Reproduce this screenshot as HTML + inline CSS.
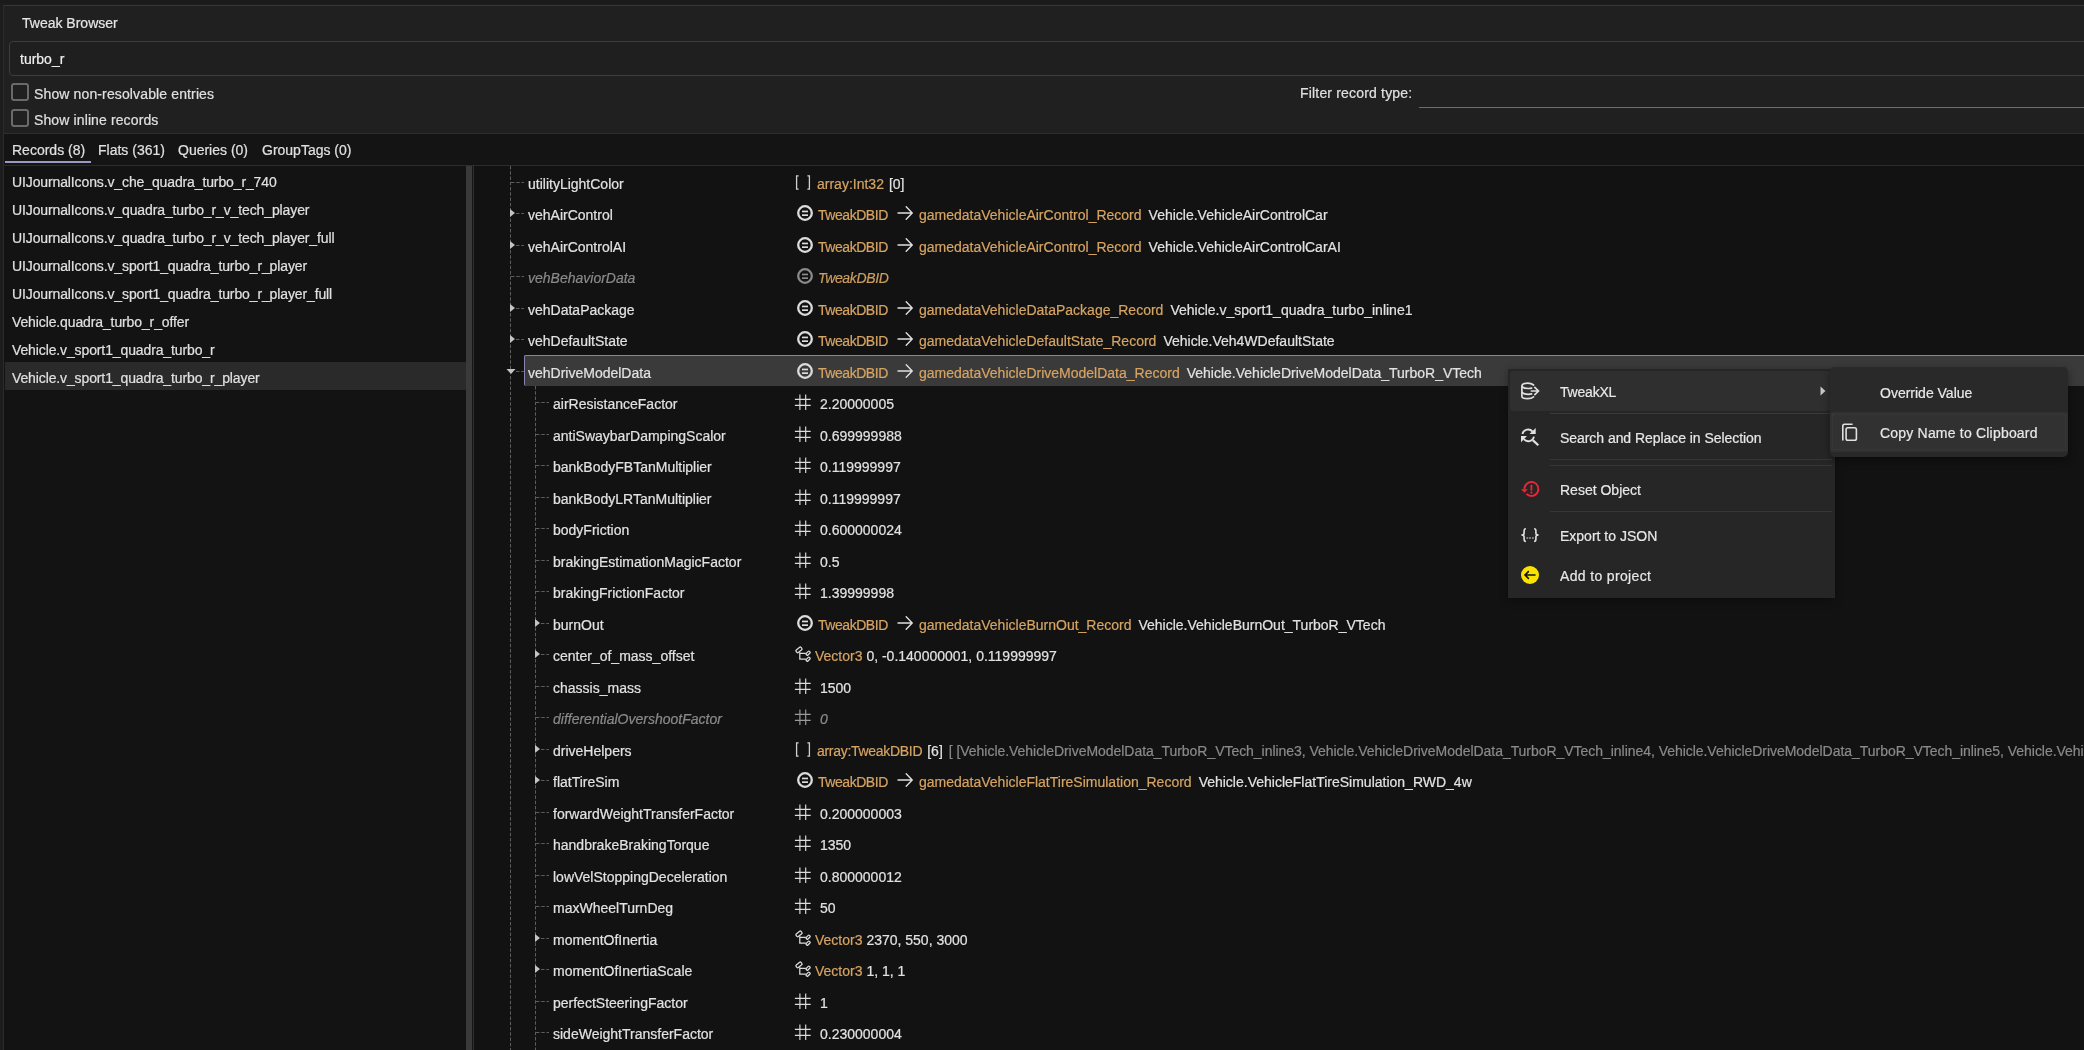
<!DOCTYPE html>
<html><head><meta charset="utf-8"><style>
html,body{margin:0;padding:0;width:2084px;height:1050px;overflow:hidden;background:#1e1e1e}
.t{position:absolute;white-space:nowrap;will-change:transform;-webkit-text-stroke:0.2px currentColor;font-family:"Liberation Sans", sans-serif;font-size:14px;line-height:16px}
svg{overflow:visible}
</style></head><body>
<div style="position:absolute;left:0px;top:0px;width:2084px;height:1050px;background:#1d1d1d;"></div>
<div style="position:absolute;left:0px;top:0px;width:2084px;height:4px;background:#1b1b1b;"></div>
<div style="position:absolute;left:3px;top:5px;width:2081px;height:1045px;background:#202020;border-left:1px solid #2b2b2b;border-top:1px solid #363636;box-sizing:border-box"></div>
<div class="t" style="left:22px;top:15px;color:#e6e6e6;">Tweak Browser</div>
<div style="position:absolute;left:9px;top:41px;width:2200px;height:35px;box-sizing:border-box;border:1px solid #3d3c44;border-radius:4px;background:#1f1f1f"></div>
<div class="t" style="left:20px;top:50.7px;color:#f0f0f0;">turbo_r</div>
<div style="position:absolute;left:11px;top:83px;width:18px;height:18px;box-sizing:border-box;border:2px solid #6a6a6a;border-radius:3px"></div>
<div class="t" style="left:34px;top:86.2px;color:#e0e0e0;letter-spacing:0.13px">Show non-resolvable entries</div>
<div style="position:absolute;left:11px;top:109px;width:18px;height:18px;box-sizing:border-box;border:2px solid #6a6a6a;border-radius:3px"></div>
<div class="t" style="left:34px;top:112.2px;color:#e0e0e0;letter-spacing:0.12px">Show inline records</div>
<div class="t" style="left:1300px;top:85px;color:#e0e0e0;letter-spacing:0.18px">Filter record type:</div>
<div style="position:absolute;left:1419px;top:107px;width:665px;height:1px;background:#6c6c6c;"></div>
<div style="position:absolute;left:4px;top:133px;width:2080px;height:1px;background:#2e2e2e;"></div>
<div style="position:absolute;left:4px;top:134px;width:2080px;height:31px;background:#141414;"></div>
<div class="t" style="left:12px;top:142px;color:#e0e0e0;">Records (8)</div>
<div class="t" style="left:98px;top:142px;color:#e0e0e0;">Flats (361)</div>
<div class="t" style="left:178px;top:142px;color:#e0e0e0;">Queries (0)</div>
<div class="t" style="left:262px;top:142px;color:#e0e0e0;">GroupTags (0)</div>
<div style="position:absolute;left:5px;top:161px;width:86px;height:2px;background:#9f98c4;"></div>
<div style="position:absolute;left:4px;top:165px;width:2080px;height:1px;background:#2c2c2c;"></div>
<div style="position:absolute;left:4px;top:166px;width:462px;height:884px;background:#131313;"></div>
<div style="position:absolute;left:466px;top:166px;width:6px;height:884px;background:#3a3a3a;"></div>
<div style="position:absolute;left:472px;top:166px;width:1px;height:884px;background:#161616;"></div>
<div style="position:absolute;left:473px;top:166px;width:1px;height:884px;background:#303030;"></div>
<div style="position:absolute;left:474px;top:166px;width:1610px;height:884px;background:#121212;"></div>
<div style="position:absolute;left:5px;top:362px;width:461px;height:28px;background:#2a2a2a;"></div>
<div class="t" style="left:12px;top:174.1px;color:#e0e0e0;letter-spacing:-0.12px">UIJournalIcons.v_che_quadra_turbo_r_740</div>
<div class="t" style="left:12px;top:202.1px;color:#e0e0e0;letter-spacing:-0.12px">UIJournalIcons.v_quadra_turbo_r_v_tech_player</div>
<div class="t" style="left:12px;top:230.1px;color:#e0e0e0;letter-spacing:-0.12px">UIJournalIcons.v_quadra_turbo_r_v_tech_player_full</div>
<div class="t" style="left:12px;top:258.1px;color:#e0e0e0;letter-spacing:-0.12px">UIJournalIcons.v_sport1_quadra_turbo_r_player</div>
<div class="t" style="left:12px;top:286.1px;color:#e0e0e0;letter-spacing:-0.12px">UIJournalIcons.v_sport1_quadra_turbo_r_player_full</div>
<div class="t" style="left:12px;top:314.1px;color:#e0e0e0;letter-spacing:-0.12px">Vehicle.quadra_turbo_r_offer</div>
<div class="t" style="left:12px;top:342.1px;color:#e0e0e0;letter-spacing:-0.12px">Vehicle.v_sport1_quadra_turbo_r</div>
<div class="t" style="left:12px;top:370.1px;color:#e0e0e0;letter-spacing:-0.12px">Vehicle.v_sport1_quadra_turbo_r_player</div>
<div style="position:absolute;left:524px;top:355px;width:1560px;height:31px;background:#3a3a3a;border-top:1px solid #8a82b0;border-left:1px solid #8a82b0;box-sizing:border-box;border-radius:2px 0 0 2px"></div>
<svg style="position:absolute;left:0;top:0" width="2084" height="1050" viewBox="0 0 2084 1050"><path d="M510.5 166V1050" stroke="#5c5c5c" stroke-width="1" stroke-dasharray="3.5 1.75"/><path d="M535.5 386V1050" stroke="#5c5c5c" stroke-width="1" stroke-dasharray="3.5 1.75"/><path d="M511 182.5H524" stroke="#5c5c5c" stroke-width="1" stroke-dasharray="3.5 1.75"/><path d="M516 213.5H524" stroke="#5c5c5c" stroke-width="1" stroke-dasharray="3.5 1.75"/><path d="M516 245.5H524" stroke="#5c5c5c" stroke-width="1" stroke-dasharray="3.5 1.75"/><path d="M511 276.5H524" stroke="#5c5c5c" stroke-width="1" stroke-dasharray="3.5 1.75"/><path d="M516 308.5H524" stroke="#5c5c5c" stroke-width="1" stroke-dasharray="3.5 1.75"/><path d="M516 339.5H524" stroke="#5c5c5c" stroke-width="1" stroke-dasharray="3.5 1.75"/><path d="M516 371.5H524" stroke="#5c5c5c" stroke-width="1" stroke-dasharray="3.5 1.75"/><path d="M536 402.5H549" stroke="#5c5c5c" stroke-width="1" stroke-dasharray="3.5 1.75"/><path d="M536 434.5H549" stroke="#5c5c5c" stroke-width="1" stroke-dasharray="3.5 1.75"/><path d="M536 465.5H549" stroke="#5c5c5c" stroke-width="1" stroke-dasharray="3.5 1.75"/><path d="M536 497.5H549" stroke="#5c5c5c" stroke-width="1" stroke-dasharray="3.5 1.75"/><path d="M536 528.5H549" stroke="#5c5c5c" stroke-width="1" stroke-dasharray="3.5 1.75"/><path d="M536 560.5H549" stroke="#5c5c5c" stroke-width="1" stroke-dasharray="3.5 1.75"/><path d="M536 591.5H549" stroke="#5c5c5c" stroke-width="1" stroke-dasharray="3.5 1.75"/><path d="M541 623.5H549" stroke="#5c5c5c" stroke-width="1" stroke-dasharray="3.5 1.75"/><path d="M541 654.5H549" stroke="#5c5c5c" stroke-width="1" stroke-dasharray="3.5 1.75"/><path d="M536 686.5H549" stroke="#5c5c5c" stroke-width="1" stroke-dasharray="3.5 1.75"/><path d="M536 717.5H549" stroke="#5c5c5c" stroke-width="1" stroke-dasharray="3.5 1.75"/><path d="M541 749.5H549" stroke="#5c5c5c" stroke-width="1" stroke-dasharray="3.5 1.75"/><path d="M541 780.5H549" stroke="#5c5c5c" stroke-width="1" stroke-dasharray="3.5 1.75"/><path d="M536 812.5H549" stroke="#5c5c5c" stroke-width="1" stroke-dasharray="3.5 1.75"/><path d="M536 843.5H549" stroke="#5c5c5c" stroke-width="1" stroke-dasharray="3.5 1.75"/><path d="M536 875.5H549" stroke="#5c5c5c" stroke-width="1" stroke-dasharray="3.5 1.75"/><path d="M536 906.5H549" stroke="#5c5c5c" stroke-width="1" stroke-dasharray="3.5 1.75"/><path d="M541 938.5H549" stroke="#5c5c5c" stroke-width="1" stroke-dasharray="3.5 1.75"/><path d="M541 969.5H549" stroke="#5c5c5c" stroke-width="1" stroke-dasharray="3.5 1.75"/><path d="M536 1001.5H549" stroke="#5c5c5c" stroke-width="1" stroke-dasharray="3.5 1.75"/><path d="M536 1032.5H549" stroke="#5c5c5c" stroke-width="1" stroke-dasharray="3.5 1.75"/></svg>
<div class="t" style="left:528px;top:175.8px;color:#e2e2e2;">utilityLightColor</div>
<svg style="position:absolute;left:793.6px;top:173.70000000000002px;" width="18" height="18" viewBox="0 0 18 18"><g stroke="#d0d0d0" stroke-width="1.3" fill="none"><path d="M4.6 1.9H2.6V15.1H4.6M13.4 1.9H15.4V15.1H13.4"/></g></svg>
<div class="t" style="left:817px;top:175.8px;color:#e2e2e2;"><span style="color:#d6a463;">array:Int32</span><span style="color:#e2e2e2;margin-left:5px">[0]</span></div>
<svg style="position:absolute;left:508.5px;top:208.4px;" width="8" height="10" viewBox="0 0 8 10"><path d="M1 1V9L6 5Z" fill="#c4c4c4"/></svg>
<div class="t" style="left:528px;top:207.3px;color:#e2e2e2;">vehAirControl</div>
<svg style="position:absolute;left:795.6px;top:204.4px;" width="18" height="18" viewBox="0 0 18 18"><circle cx="9" cy="9" r="6.8" fill="none" stroke="#dcdcdc" stroke-width="2.3"/><rect x="6" y="6.6" width="6" height="1.7" fill="#dcdcdc"/><rect x="6" y="10.3" width="6" height="1.7" fill="#dcdcdc"/></svg>
<div class="t" style="left:817.5px;top:207.3px;color:#e2e2e2;"><span style="color:#d6a463;letter-spacing:-0.45px">TweakDBID</span></div>
<svg style="position:absolute;left:896.5px;top:205.4px;" width="17" height="16" viewBox="0 0 17 16"><g stroke="#e0e0e0" stroke-width="1.4" fill="none" stroke-linecap="round"><path d="M1 8H15M9.2 1.8L15.2 8L9.2 14.2"/></g></svg>
<div class="t" style="left:919px;top:207.3px"><span style="color:#d6a463;">gamedataVehicleAirControl_Record</span><span style="color:#e2e2e2;margin-left:7px">Vehicle.VehicleAirControlCar</span></div>
<svg style="position:absolute;left:508.5px;top:239.9px;" width="8" height="10" viewBox="0 0 8 10"><path d="M1 1V9L6 5Z" fill="#c4c4c4"/></svg>
<div class="t" style="left:528px;top:238.8px;color:#e2e2e2;">vehAirControlAI</div>
<svg style="position:absolute;left:795.6px;top:235.9px;" width="18" height="18" viewBox="0 0 18 18"><circle cx="9" cy="9" r="6.8" fill="none" stroke="#dcdcdc" stroke-width="2.3"/><rect x="6" y="6.6" width="6" height="1.7" fill="#dcdcdc"/><rect x="6" y="10.3" width="6" height="1.7" fill="#dcdcdc"/></svg>
<div class="t" style="left:817.5px;top:238.8px;color:#e2e2e2;"><span style="color:#d6a463;letter-spacing:-0.45px">TweakDBID</span></div>
<svg style="position:absolute;left:896.5px;top:236.9px;" width="17" height="16" viewBox="0 0 17 16"><g stroke="#e0e0e0" stroke-width="1.4" fill="none" stroke-linecap="round"><path d="M1 8H15M9.2 1.8L15.2 8L9.2 14.2"/></g></svg>
<div class="t" style="left:919px;top:238.8px"><span style="color:#d6a463;">gamedataVehicleAirControl_Record</span><span style="color:#e2e2e2;margin-left:7px">Vehicle.VehicleAirControlCarAI</span></div>
<div class="t" style="left:528px;top:270.3px;color:#8a8a8a;font-style:italic">vehBehaviorData</div>
<svg style="position:absolute;left:795.6px;top:267.40000000000003px;" width="18" height="18" viewBox="0 0 18 18"><circle cx="9" cy="9" r="6.8" fill="none" stroke="#8a8a8a" stroke-width="2.3"/><rect x="6" y="6.6" width="6" height="1.7" fill="#8a8a8a"/><rect x="6" y="10.3" width="6" height="1.7" fill="#8a8a8a"/></svg>
<div class="t" style="left:817.5px;top:270.3px;color:#cc9e60;font-style:italic;letter-spacing:-0.35px">TweakDBID</div>
<svg style="position:absolute;left:508.5px;top:302.90000000000003px;" width="8" height="10" viewBox="0 0 8 10"><path d="M1 1V9L6 5Z" fill="#c4c4c4"/></svg>
<div class="t" style="left:528px;top:301.8px;color:#e2e2e2;">vehDataPackage</div>
<svg style="position:absolute;left:795.6px;top:298.90000000000003px;" width="18" height="18" viewBox="0 0 18 18"><circle cx="9" cy="9" r="6.8" fill="none" stroke="#dcdcdc" stroke-width="2.3"/><rect x="6" y="6.6" width="6" height="1.7" fill="#dcdcdc"/><rect x="6" y="10.3" width="6" height="1.7" fill="#dcdcdc"/></svg>
<div class="t" style="left:817.5px;top:301.8px;color:#e2e2e2;"><span style="color:#d6a463;letter-spacing:-0.45px">TweakDBID</span></div>
<svg style="position:absolute;left:896.5px;top:299.90000000000003px;" width="17" height="16" viewBox="0 0 17 16"><g stroke="#e0e0e0" stroke-width="1.4" fill="none" stroke-linecap="round"><path d="M1 8H15M9.2 1.8L15.2 8L9.2 14.2"/></g></svg>
<div class="t" style="left:919px;top:301.8px"><span style="color:#d6a463;">gamedataVehicleDataPackage_Record</span><span style="color:#e2e2e2;margin-left:7px">Vehicle.v_sport1_quadra_turbo_inline1</span></div>
<svg style="position:absolute;left:508.5px;top:334.40000000000003px;" width="8" height="10" viewBox="0 0 8 10"><path d="M1 1V9L6 5Z" fill="#c4c4c4"/></svg>
<div class="t" style="left:528px;top:333.3px;color:#e2e2e2;">vehDefaultState</div>
<svg style="position:absolute;left:795.6px;top:330.40000000000003px;" width="18" height="18" viewBox="0 0 18 18"><circle cx="9" cy="9" r="6.8" fill="none" stroke="#dcdcdc" stroke-width="2.3"/><rect x="6" y="6.6" width="6" height="1.7" fill="#dcdcdc"/><rect x="6" y="10.3" width="6" height="1.7" fill="#dcdcdc"/></svg>
<div class="t" style="left:817.5px;top:333.3px;color:#e2e2e2;"><span style="color:#d6a463;letter-spacing:-0.45px">TweakDBID</span></div>
<svg style="position:absolute;left:896.5px;top:331.40000000000003px;" width="17" height="16" viewBox="0 0 17 16"><g stroke="#e0e0e0" stroke-width="1.4" fill="none" stroke-linecap="round"><path d="M1 8H15M9.2 1.8L15.2 8L9.2 14.2"/></g></svg>
<div class="t" style="left:919px;top:333.3px"><span style="color:#d6a463;">gamedataVehicleDefaultState_Record</span><span style="color:#e2e2e2;margin-left:7px">Vehicle.Veh4WDefaultState</span></div>
<svg style="position:absolute;left:505.5px;top:368.3px;" width="10" height="7" viewBox="0 0 10 7"><path d="M0.5 1H9.5L5 6Z" fill="#c4c4c4"/></svg>
<div class="t" style="left:528px;top:364.8px;color:#e2e2e2;">vehDriveModelData</div>
<svg style="position:absolute;left:795.6px;top:361.90000000000003px;" width="18" height="18" viewBox="0 0 18 18"><circle cx="9" cy="9" r="6.8" fill="none" stroke="#dcdcdc" stroke-width="2.3"/><rect x="6" y="6.6" width="6" height="1.7" fill="#dcdcdc"/><rect x="6" y="10.3" width="6" height="1.7" fill="#dcdcdc"/></svg>
<div class="t" style="left:817.5px;top:364.8px;color:#e2e2e2;"><span style="color:#d6a463;letter-spacing:-0.45px">TweakDBID</span></div>
<svg style="position:absolute;left:896.5px;top:362.90000000000003px;" width="17" height="16" viewBox="0 0 17 16"><g stroke="#e0e0e0" stroke-width="1.4" fill="none" stroke-linecap="round"><path d="M1 8H15M9.2 1.8L15.2 8L9.2 14.2"/></g></svg>
<div class="t" style="left:919px;top:364.8px"><span style="color:#d6a463;">gamedataVehicleDriveModelData_Record</span><span style="color:#e2e2e2;margin-left:7px">Vehicle.VehicleDriveModelData_TurboR_VTech</span></div>
<div class="t" style="left:553px;top:396.3px;color:#e2e2e2;">airResistanceFactor</div>
<svg style="position:absolute;left:793.6px;top:393.40000000000003px;" width="18" height="18" viewBox="0 0 18 18"><g stroke="#dcdcdc" stroke-width="1.15" fill="none"><path d="M5.9 1.4V16.9M11.7 1.4V16.9M0.9 6.4H16.7M0.9 12.4H16.7"/></g></svg>
<div class="t" style="left:820px;top:396.3px;color:#e2e2e2;">2.20000005</div>
<div class="t" style="left:553px;top:427.8px;color:#e2e2e2;">antiSwaybarDampingScalor</div>
<svg style="position:absolute;left:793.6px;top:424.90000000000003px;" width="18" height="18" viewBox="0 0 18 18"><g stroke="#dcdcdc" stroke-width="1.15" fill="none"><path d="M5.9 1.4V16.9M11.7 1.4V16.9M0.9 6.4H16.7M0.9 12.4H16.7"/></g></svg>
<div class="t" style="left:820px;top:427.8px;color:#e2e2e2;">0.699999988</div>
<div class="t" style="left:553px;top:459.3px;color:#e2e2e2;">bankBodyFBTanMultiplier</div>
<svg style="position:absolute;left:793.6px;top:456.40000000000003px;" width="18" height="18" viewBox="0 0 18 18"><g stroke="#dcdcdc" stroke-width="1.15" fill="none"><path d="M5.9 1.4V16.9M11.7 1.4V16.9M0.9 6.4H16.7M0.9 12.4H16.7"/></g></svg>
<div class="t" style="left:820px;top:459.3px;color:#e2e2e2;">0.119999997</div>
<div class="t" style="left:553px;top:490.8px;color:#e2e2e2;">bankBodyLRTanMultiplier</div>
<svg style="position:absolute;left:793.6px;top:487.90000000000003px;" width="18" height="18" viewBox="0 0 18 18"><g stroke="#dcdcdc" stroke-width="1.15" fill="none"><path d="M5.9 1.4V16.9M11.7 1.4V16.9M0.9 6.4H16.7M0.9 12.4H16.7"/></g></svg>
<div class="t" style="left:820px;top:490.8px;color:#e2e2e2;">0.119999997</div>
<div class="t" style="left:553px;top:522.3px;color:#e2e2e2;">bodyFriction</div>
<svg style="position:absolute;left:793.6px;top:519.4px;" width="18" height="18" viewBox="0 0 18 18"><g stroke="#dcdcdc" stroke-width="1.15" fill="none"><path d="M5.9 1.4V16.9M11.7 1.4V16.9M0.9 6.4H16.7M0.9 12.4H16.7"/></g></svg>
<div class="t" style="left:820px;top:522.3px;color:#e2e2e2;">0.600000024</div>
<div class="t" style="left:553px;top:553.8px;color:#e2e2e2;">brakingEstimationMagicFactor</div>
<svg style="position:absolute;left:793.6px;top:550.9px;" width="18" height="18" viewBox="0 0 18 18"><g stroke="#dcdcdc" stroke-width="1.15" fill="none"><path d="M5.9 1.4V16.9M11.7 1.4V16.9M0.9 6.4H16.7M0.9 12.4H16.7"/></g></svg>
<div class="t" style="left:820px;top:553.8px;color:#e2e2e2;">0.5</div>
<div class="t" style="left:553px;top:585.3px;color:#e2e2e2;">brakingFrictionFactor</div>
<svg style="position:absolute;left:793.6px;top:582.4px;" width="18" height="18" viewBox="0 0 18 18"><g stroke="#dcdcdc" stroke-width="1.15" fill="none"><path d="M5.9 1.4V16.9M11.7 1.4V16.9M0.9 6.4H16.7M0.9 12.4H16.7"/></g></svg>
<div class="t" style="left:820px;top:585.3px;color:#e2e2e2;">1.39999998</div>
<svg style="position:absolute;left:533.5px;top:617.9px;" width="8" height="10" viewBox="0 0 8 10"><path d="M1 1V9L6 5Z" fill="#c4c4c4"/></svg>
<div class="t" style="left:553px;top:616.8px;color:#e2e2e2;">burnOut</div>
<svg style="position:absolute;left:795.6px;top:613.9px;" width="18" height="18" viewBox="0 0 18 18"><circle cx="9" cy="9" r="6.8" fill="none" stroke="#dcdcdc" stroke-width="2.3"/><rect x="6" y="6.6" width="6" height="1.7" fill="#dcdcdc"/><rect x="6" y="10.3" width="6" height="1.7" fill="#dcdcdc"/></svg>
<div class="t" style="left:817.5px;top:616.8px;color:#e2e2e2;"><span style="color:#d6a463;letter-spacing:-0.45px">TweakDBID</span></div>
<svg style="position:absolute;left:896.5px;top:614.9px;" width="17" height="16" viewBox="0 0 17 16"><g stroke="#e0e0e0" stroke-width="1.4" fill="none" stroke-linecap="round"><path d="M1 8H15M9.2 1.8L15.2 8L9.2 14.2"/></g></svg>
<div class="t" style="left:919px;top:616.8px"><span style="color:#d6a463;">gamedataVehicleBurnOut_Record</span><span style="color:#e2e2e2;margin-left:7px">Vehicle.VehicleBurnOut_TurboR_VTech</span></div>
<svg style="position:absolute;left:533.5px;top:649.4px;" width="8" height="10" viewBox="0 0 8 10"><path d="M1 1V9L6 5Z" fill="#c4c4c4"/></svg>
<div class="t" style="left:553px;top:648.3px;color:#e2e2e2;">center_of_mass_offset</div>
<svg style="position:absolute;left:793.6px;top:645.4px;" width="18" height="18" viewBox="0 0 18 18"><g stroke="#dcdcdc" stroke-width="1.25" fill="none"><rect x="1.8" y="3.3" width="6.4" height="3.2" rx="1" transform="rotate(-40 5 4.9)"/><path d="M5.8 7.2V14.1H11.9M5.8 8.3H11.9"/><rect x="11.9" y="7" width="4.4" height="2.4" rx="0.8" transform="rotate(-45 14.1 8.2)"/><rect x="11.9" y="13" width="4.4" height="2.4" rx="0.8" transform="rotate(-45 14.1 14.2)"/></g></svg>
<div class="t" style="left:815.4px;top:648.3px;color:#e2e2e2;"><span style="color:#d6a463;">Vector3</span> <span style="color:#e2e2e2;">0, -0.140000001, 0.119999997</span></div>
<div class="t" style="left:553px;top:679.8px;color:#e2e2e2;">chassis_mass</div>
<svg style="position:absolute;left:793.6px;top:676.9px;" width="18" height="18" viewBox="0 0 18 18"><g stroke="#dcdcdc" stroke-width="1.15" fill="none"><path d="M5.9 1.4V16.9M11.7 1.4V16.9M0.9 6.4H16.7M0.9 12.4H16.7"/></g></svg>
<div class="t" style="left:820px;top:679.8px;color:#e2e2e2;">1500</div>
<div class="t" style="left:553px;top:711.3px;color:#8a8a8a;font-style:italic">differentialOvershootFactor</div>
<svg style="position:absolute;left:793.6px;top:708.4px;" width="18" height="18" viewBox="0 0 18 18"><g stroke="#9a9a9a" stroke-width="1.15" fill="none"><path d="M5.9 1.4V16.9M11.7 1.4V16.9M0.9 6.4H16.7M0.9 12.4H16.7"/></g></svg>
<div class="t" style="left:820px;top:711.3px;color:#8a8a8a;font-style:italic">0</div>
<svg style="position:absolute;left:533.5px;top:743.9px;" width="8" height="10" viewBox="0 0 8 10"><path d="M1 1V9L6 5Z" fill="#c4c4c4"/></svg>
<div class="t" style="left:553px;top:742.8px;color:#e2e2e2;">driveHelpers</div>
<svg style="position:absolute;left:793.6px;top:740.6999999999999px;" width="18" height="18" viewBox="0 0 18 18"><g stroke="#d0d0d0" stroke-width="1.3" fill="none"><path d="M4.6 1.9H2.6V15.1H4.6M13.4 1.9H15.4V15.1H13.4"/></g></svg>
<div class="t" style="left:817px;top:742.8px;color:#e2e2e2;"><span style="color:#d6a463;letter-spacing:-0.3px">array:TweakDBID</span><span style="color:#e2e2e2;margin-left:5px">[6]</span><span style="color:#8a8a8a;margin-left:6px;letter-spacing:-0.04px">[ [Vehicle.VehicleDriveModelData_TurboR_VTech_inline3, Vehicle.VehicleDriveModelData_TurboR_VTech_inline4, Vehicle.VehicleDriveModelData_TurboR_VTech_inline5, Vehicle.VehicleDriveModelData_TurboR_VTech_inline6</span></div>
<svg style="position:absolute;left:533.5px;top:775.4px;" width="8" height="10" viewBox="0 0 8 10"><path d="M1 1V9L6 5Z" fill="#c4c4c4"/></svg>
<div class="t" style="left:553px;top:774.3px;color:#e2e2e2;">flatTireSim</div>
<svg style="position:absolute;left:795.6px;top:771.4px;" width="18" height="18" viewBox="0 0 18 18"><circle cx="9" cy="9" r="6.8" fill="none" stroke="#dcdcdc" stroke-width="2.3"/><rect x="6" y="6.6" width="6" height="1.7" fill="#dcdcdc"/><rect x="6" y="10.3" width="6" height="1.7" fill="#dcdcdc"/></svg>
<div class="t" style="left:817.5px;top:774.3px;color:#e2e2e2;"><span style="color:#d6a463;letter-spacing:-0.45px">TweakDBID</span></div>
<svg style="position:absolute;left:896.5px;top:772.4px;" width="17" height="16" viewBox="0 0 17 16"><g stroke="#e0e0e0" stroke-width="1.4" fill="none" stroke-linecap="round"><path d="M1 8H15M9.2 1.8L15.2 8L9.2 14.2"/></g></svg>
<div class="t" style="left:919px;top:774.3px"><span style="color:#d6a463;">gamedataVehicleFlatTireSimulation_Record</span><span style="color:#e2e2e2;margin-left:7px">Vehicle.VehicleFlatTireSimulation_RWD_4w</span></div>
<div class="t" style="left:553px;top:805.8px;color:#e2e2e2;">forwardWeightTransferFactor</div>
<svg style="position:absolute;left:793.6px;top:802.9px;" width="18" height="18" viewBox="0 0 18 18"><g stroke="#dcdcdc" stroke-width="1.15" fill="none"><path d="M5.9 1.4V16.9M11.7 1.4V16.9M0.9 6.4H16.7M0.9 12.4H16.7"/></g></svg>
<div class="t" style="left:820px;top:805.8px;color:#e2e2e2;">0.200000003</div>
<div class="t" style="left:553px;top:837.3px;color:#e2e2e2;">handbrakeBrakingTorque</div>
<svg style="position:absolute;left:793.6px;top:834.4px;" width="18" height="18" viewBox="0 0 18 18"><g stroke="#dcdcdc" stroke-width="1.15" fill="none"><path d="M5.9 1.4V16.9M11.7 1.4V16.9M0.9 6.4H16.7M0.9 12.4H16.7"/></g></svg>
<div class="t" style="left:820px;top:837.3px;color:#e2e2e2;">1350</div>
<div class="t" style="left:553px;top:868.8px;color:#e2e2e2;">lowVelStoppingDeceleration</div>
<svg style="position:absolute;left:793.6px;top:865.9px;" width="18" height="18" viewBox="0 0 18 18"><g stroke="#dcdcdc" stroke-width="1.15" fill="none"><path d="M5.9 1.4V16.9M11.7 1.4V16.9M0.9 6.4H16.7M0.9 12.4H16.7"/></g></svg>
<div class="t" style="left:820px;top:868.8px;color:#e2e2e2;">0.800000012</div>
<div class="t" style="left:553px;top:900.3px;color:#e2e2e2;">maxWheelTurnDeg</div>
<svg style="position:absolute;left:793.6px;top:897.4px;" width="18" height="18" viewBox="0 0 18 18"><g stroke="#dcdcdc" stroke-width="1.15" fill="none"><path d="M5.9 1.4V16.9M11.7 1.4V16.9M0.9 6.4H16.7M0.9 12.4H16.7"/></g></svg>
<div class="t" style="left:820px;top:900.3px;color:#e2e2e2;">50</div>
<svg style="position:absolute;left:533.5px;top:932.9px;" width="8" height="10" viewBox="0 0 8 10"><path d="M1 1V9L6 5Z" fill="#c4c4c4"/></svg>
<div class="t" style="left:553px;top:931.8px;color:#e2e2e2;">momentOfInertia</div>
<svg style="position:absolute;left:793.6px;top:928.9px;" width="18" height="18" viewBox="0 0 18 18"><g stroke="#dcdcdc" stroke-width="1.25" fill="none"><rect x="1.8" y="3.3" width="6.4" height="3.2" rx="1" transform="rotate(-40 5 4.9)"/><path d="M5.8 7.2V14.1H11.9M5.8 8.3H11.9"/><rect x="11.9" y="7" width="4.4" height="2.4" rx="0.8" transform="rotate(-45 14.1 8.2)"/><rect x="11.9" y="13" width="4.4" height="2.4" rx="0.8" transform="rotate(-45 14.1 14.2)"/></g></svg>
<div class="t" style="left:815.4px;top:931.8px;color:#e2e2e2;"><span style="color:#d6a463;">Vector3</span> <span style="color:#e2e2e2;">2370, 550, 3000</span></div>
<svg style="position:absolute;left:533.5px;top:964.4px;" width="8" height="10" viewBox="0 0 8 10"><path d="M1 1V9L6 5Z" fill="#c4c4c4"/></svg>
<div class="t" style="left:553px;top:963.3px;color:#e2e2e2;">momentOfInertiaScale</div>
<svg style="position:absolute;left:793.6px;top:960.4px;" width="18" height="18" viewBox="0 0 18 18"><g stroke="#dcdcdc" stroke-width="1.25" fill="none"><rect x="1.8" y="3.3" width="6.4" height="3.2" rx="1" transform="rotate(-40 5 4.9)"/><path d="M5.8 7.2V14.1H11.9M5.8 8.3H11.9"/><rect x="11.9" y="7" width="4.4" height="2.4" rx="0.8" transform="rotate(-45 14.1 8.2)"/><rect x="11.9" y="13" width="4.4" height="2.4" rx="0.8" transform="rotate(-45 14.1 14.2)"/></g></svg>
<div class="t" style="left:815.4px;top:963.3px;color:#e2e2e2;"><span style="color:#d6a463;">Vector3</span> <span style="color:#e2e2e2;">1, 1, 1</span></div>
<div class="t" style="left:553px;top:994.8px;color:#e2e2e2;">perfectSteeringFactor</div>
<svg style="position:absolute;left:793.6px;top:991.9px;" width="18" height="18" viewBox="0 0 18 18"><g stroke="#dcdcdc" stroke-width="1.15" fill="none"><path d="M5.9 1.4V16.9M11.7 1.4V16.9M0.9 6.4H16.7M0.9 12.4H16.7"/></g></svg>
<div class="t" style="left:820px;top:994.8px;color:#e2e2e2;">1</div>
<div class="t" style="left:553px;top:1026.3px;color:#e2e2e2;">sideWeightTransferFactor</div>
<svg style="position:absolute;left:793.6px;top:1023.3999999999999px;" width="18" height="18" viewBox="0 0 18 18"><g stroke="#dcdcdc" stroke-width="1.15" fill="none"><path d="M5.9 1.4V16.9M11.7 1.4V16.9M0.9 6.4H16.7M0.9 12.4H16.7"/></g></svg>
<div class="t" style="left:820px;top:1026.3px;color:#e2e2e2;">0.230000004</div>
<div style="position:absolute;left:1508px;top:369px;width:327px;height:229px;background:#262626;box-shadow:0 2px 8px rgba(0,0,0,0.35)"></div>
<div style="position:absolute;left:1510px;top:371px;width:321px;height:40px;background:#2f2f2f;border-radius:3px"></div>
<div style="position:absolute;left:1550px;top:413px;width:282px;height:1px;background:#3a3a3a;"></div>
<div style="position:absolute;left:1550px;top:459px;width:282px;height:1px;background:#363636;"></div>
<div style="position:absolute;left:1550px;top:465px;width:282px;height:1px;background:#363636;"></div>
<div style="position:absolute;left:1550px;top:511px;width:282px;height:1px;background:#363636;"></div>
<div class="t" style="left:1560px;top:384px;color:#e8e8e8;letter-spacing:-0.2px">TweakXL</div>
<div class="t" style="left:1560px;top:430px;color:#e8e8e8;letter-spacing:-0.05px">Search and Replace in Selection</div>
<div class="t" style="left:1560px;top:482px;color:#e8e8e8;letter-spacing:0px">Reset Object</div>
<div class="t" style="left:1560px;top:527.7px;color:#e8e8e8;letter-spacing:0px">Export to JSON</div>
<div class="t" style="left:1560px;top:567.7px;color:#e8e8e8;letter-spacing:0.35px">Add to project</div>
<svg style="position:absolute;left:1819px;top:385px;" width="8" height="12" viewBox="0 0 8 12"><path d="M1.5 1.5V10.5L6.5 6Z" fill="#c8c8c8"/></svg>
<div style="position:absolute;left:1830px;top:367px;width:238px;height:90px;background:#292929;border-radius:5px;box-shadow:0 3px 8px rgba(0,0,0,0.4)"></div>
<div style="position:absolute;left:1830px;top:412px;width:238px;height:40px;background:#313131;border-radius:3px"></div>
<div style="position:absolute;left:1832px;top:414px;width:234px;height:36px;background:transparent;border:1px dotted #3b3b3b;box-sizing:border-box"></div>
<div class="t" style="left:1880px;top:385px;color:#e8e8e8;">Override Value</div>
<div class="t" style="left:1880px;top:425px;color:#e8e8e8;letter-spacing:0.2px">Copy Name to Clipboard</div>
<svg style="position:absolute;left:1515px;top:376px;" width="30" height="30" viewBox="0 0 30 30"><g fill="none" stroke="#e0e0e0" stroke-width="1.7" stroke-linecap="round"><path d="M18.6 9C17.2 7.9 15.3 7.2 12.8 7.2C9.2 7.2 6.9 8.5 6.9 10.3V20.2C6.9 21.6 9.2 22.6 12.8 22.6C15.3 22.6 17.3 21.9 18.6 20.9"/><path d="M7.2 10.8C8.4 12 10.6 12.5 13.2 12.5C14.5 12.5 15.6 12.4 16.6 12.1"/><path d="M7.2 16.6C8.4 17.8 10.6 18.3 13.2 18.3C14.5 18.3 15.6 18.2 16.6 17.9"/><path d="M16.4 15H23.4M19.8 11.3L23.5 15L19.8 18.7"/></g></svg>
<svg style="position:absolute;left:1515px;top:422px;" width="30" height="30" viewBox="0 0 30 30"><g fill="none" stroke="#e0e0e0" stroke-width="1.8"><path d="M7.4 11.9A5.9 5.9 0 0 1 17.6 9.6"/><path d="M19 14.6A5.9 5.9 0 0 1 8.8 17.2"/><path d="M17.8 18.1L23.3 23.2" stroke-width="2.2"/></g><path d="M20.7 6V12H14.5Z" fill="#e0e0e0"/><path d="M6 14V20.3L12 14Z" fill="#e0e0e0"/></svg>
<svg style="position:absolute;left:1515px;top:474px;" width="30" height="30" viewBox="0 0 30 30"><path d="M9.4 15A7 7 0 1 1 11.45 19.95" fill="none" stroke="#e8283a" stroke-width="1.8"/><path d="M6 15.2H12.8L9.4 18.8Z" fill="#e8283a"/><rect x="15.5" y="10.8" width="1.8" height="5.8" fill="#e8283a"/><circle cx="16.4" cy="18.6" r="1.1" fill="#e8283a"/></svg>
<svg style="position:absolute;left:1515px;top:520px;" width="30" height="30" viewBox="0 0 30 30"><g fill="none" stroke="#e0e0e0" stroke-width="1.6"><path d="M10.9 8.7C9.5 8.7 9.1 9.4 9.1 10.8V13.2C9.1 14.3 8.4 15 6.4 15C8.4 15 9.1 15.7 9.1 16.8V19.3C9.1 20.7 9.5 21.4 10.9 21.4"/><path d="M19.1 8.7C20.5 8.7 20.9 9.4 20.9 10.8V13.2C20.9 14.3 21.6 15 23.6 15C21.6 15 20.9 15.7 20.9 16.8V19.3C20.9 20.7 20.5 21.4 19.1 21.4"/></g><g fill="#8c8c8c"><rect x="11.4" y="17.1" width="1.8" height="1.8"/><rect x="14.1" y="17.1" width="1.8" height="1.8"/><rect x="17" y="17.1" width="1.8" height="1.8"/></g></svg>
<svg style="position:absolute;left:1520px;top:565px;" width="20" height="20" viewBox="0 0 20 20"><circle cx="10" cy="10" r="9" fill="#fbe300"/><g stroke="#141414" stroke-width="1.6" fill="none" stroke-linecap="round"><path d="M5 10H15M8.4 6.6L5 10L8.4 13.4"/></g></svg>
<svg style="position:absolute;left:1840px;top:422px;" width="20" height="22" viewBox="0 0 20 22"><g fill="none" stroke="#e0e0e0" stroke-width="1.6"><path d="M2.8 18.6V4C2.8 3 3.4 2.3 4.5 2.3H12.6"/><rect x="6.1" y="5.7" width="10.3" height="12.6" rx="1.8"/></g></svg>
</body></html>
